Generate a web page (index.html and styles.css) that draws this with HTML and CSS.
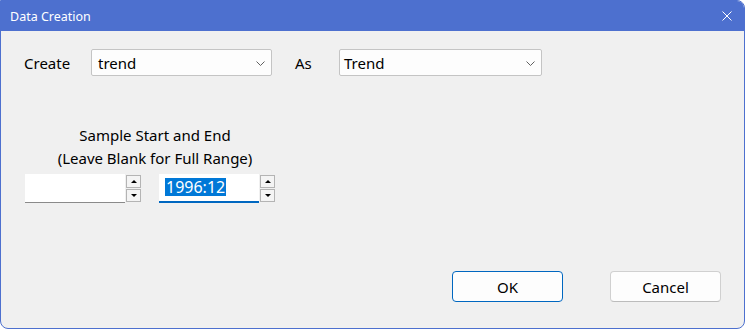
FILE: index.html
```html
<!DOCTYPE html>
<html lang="en">
<head>
  <meta charset="UTF-8">
  <title>Data Creation</title>
  <link rel="stylesheet" href="styles.css">
</head>
<body>

  <div class="window">
    <!-- Title bar -->
    <div class="titlebar">
      <span class="title">Data Creation</span>
      <svg class="close" width="10" height="10" viewBox="0 0 10 10">
        <path d="M0.5 0.5 L9.5 9.5 M9.5 0.5 L0.5 9.5" stroke="#fff" stroke-width="1" fill="none"/>
      </svg>
    </div>

    <div class="content">
      <div class="row-create">
        <span class="label label-create">Create</span>
        <div class="combo combo-series">
          <span>trend</span>
          <svg class="chevron" width="9" height="5" viewBox="0 0 9 5">
            <path d="M0.5 0.5 L4.5 4.5 L8.5 0.5" stroke="#606060" stroke-width="1" fill="none"/>
          </svg>
        </div>
        <span class="label label-as">As</span>
        <div class="combo combo-type">
          <span>Trend</span>
          <svg class="chevron" width="9" height="5" viewBox="0 0 9 5">
            <path d="M0.5 0.5 L4.5 4.5 L8.5 0.5" stroke="#606060" stroke-width="1" fill="none"/>
          </svg>
        </div>
      </div>

      <div class="sample">
        <div class="sample-caption">
          <div>Sample Start and End</div>
          <div>(Leave Blank for Full Range)</div>
        </div>
        <div class="sample-fields">
          <div class="field-group">
            <div class="edit"></div>
            <div class="spin">
              <div class="spin-btn"><span class="arrow-up"></span></div>
              <div class="spin-btn"><span class="arrow-down"></span></div>
            </div>
          </div>
          <div class="field-group">
            <div class="edit edit-focus"><span class="selected">1996:12</span></div>
            <div class="spin">
              <div class="spin-btn"><span class="arrow-up"></span></div>
              <div class="spin-btn"><span class="arrow-down"></span></div>
            </div>
          </div>
        </div>
      </div>

      <div class="buttons">
        <button class="btn btn-default">OK</button>
        <button class="btn">Cancel</button>
      </div>
    </div>
  </div>

</body>
</html>
```

FILE: styles.css
```css
* {
  margin: 0;
  padding: 0;
  box-sizing: border-box;
}

html, body {
  background: #fff;
  width: 745px;
  height: 329px;
  overflow: hidden;
  font-family: 'Noto Sans', 'Open Sans', sans-serif;
  color: #000;
}

.window {
  width: 745px;
  height: 329px;
  border: 1px solid #4d70cf;
  border-radius: 0 8px 8px 8px;
  background: #f0f0f0;
  display: flex;
  flex-direction: column;
  overflow: hidden;
}

.titlebar {
  height: 30px;
  background: #4d70cf;
  display: flex;
  align-items: center;
  justify-content: space-between;
  padding: 0 12px 0 9px;
  color: #fff;
}

.title {
  font-size: 12.5px;
}

.close {
  margin-top: -1px;
}

.content {
  flex: 1;
  display: flex;
  flex-direction: column;
  padding: 18px 23px 26px 23px;
}

/* first row */
.row-create {
  display: flex;
  align-items: center;
  height: 27px;
}

.label {
  font-size: 15px;
}

.label-create {
  width: 67px;
}

.label-as {
  width: 44px;
  margin-left: 23px;
}

.combo {
  height: 27px;
  background: #fdfdfd;
  border: 1px solid #c4c4c4;
  border-radius: 2px;
  display: flex;
  align-items: center;
  justify-content: space-between;
  padding: 0 6px 0 6px;
  font-size: 15px;
}

.combo-series {
  width: 181px;
}

.combo-type {
  width: 203px;
  padding-left: 4px;
}

.chevron {
  margin-top: 1px;
}

/* sample range */
.sample {
  margin-top: 48px;
  width: 260px;
  margin-left: 1px;
}

.sample-caption {
  text-align: center;
  font-size: 15px;
  line-height: 23px;
}

.sample-fields {
  display: flex;
  gap: 18px;
  margin-top: 4px;
}

.field-group {
  display: flex;
  gap: 1px;
}

.edit {
  width: 100px;
  height: 29px;
  background: #fff;
  border-bottom: 1px solid #8a8a8a;
  display: flex;
  align-items: center;
  padding-left: 6px;
  font-size: 16px;
}

.edit-focus {
  border-bottom: 2px solid #0067c0;
  padding-bottom: 1px;
}

.selected {
  background: #0078d7;
  color: #fff;
  padding: 0 1px;
  line-height: 18px;
}

.spin {
  display: flex;
  flex-direction: column;
  gap: 1px;
  padding-top: 1px;
}

.spin-btn {
  width: 15px;
  height: 13px;
  border: 1px solid #b4b4b4;
  background: #f4f4f4;
  display: flex;
  align-items: center;
  justify-content: center;
}

.arrow-up {
  border-left: 3px solid transparent;
  border-right: 3px solid transparent;
  border-bottom: 3px solid #000;
}

.arrow-down {
  border-left: 3px solid transparent;
  border-right: 3px solid transparent;
  border-top: 3px solid #000;
}

/* buttons */
.buttons {
  margin-top: auto;
  display: flex;
  justify-content: flex-end;
  gap: 47px;
}

.btn {
  width: 111px;
  height: 31px;
  border: 1px solid #d0d0d0;
  border-bottom-color: #bcbcbc;
  border-radius: 4px;
  background: #fdfdfd;
  font-family: inherit;
  font-size: 15px;
  color: #000;
}

.btn-default {
  border: 1px solid #0067c0;
}
```
